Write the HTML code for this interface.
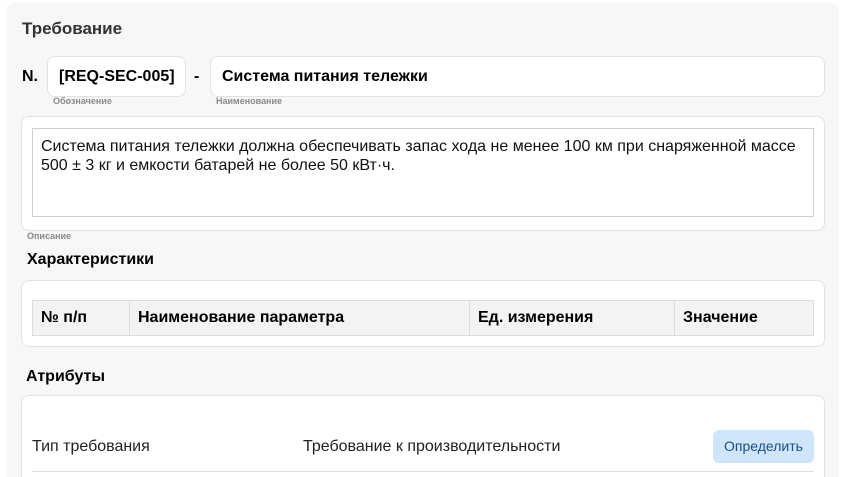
<!DOCTYPE html>
<html style="width:849px;height:477px;overflow:hidden"><head><meta charset="utf-8"><style>
*{box-sizing:border-box;margin:0;padding:0}
body{width:849px;height:477px;background:#fff;font-family:"Liberation Sans",sans-serif;position:relative;overflow:hidden;color:#000}
.a{position:absolute}
.panel{left:6px;top:3px;width:833px;height:474px;background:#f7f7f7;border-radius:8px 8px 0 0}
.box{background:#fff;border:1px solid #e2e2e2;border-radius:8px}
.lbl{font-size:9px;color:#8a8a8a;font-weight:bold}
.b{font-weight:bold}
table{border-collapse:collapse}
td{border:1px solid #dcdcdc;background:#f3f3f3;font-weight:bold;font-size:16px;padding:0 8px;height:35px}
</style></head><body>
<div class="a panel"></div>
<div class="a b" style="left:22px;top:19px;font-size:17px;color:#333">Требование</div>
<div class="a b" style="left:22px;top:68px;font-size:16px">N.</div>
<div class="a box" style="left:47px;top:56px;width:139px;height:41px"></div>
<div class="a b" style="left:59px;top:68px;font-size:16px">[REQ-SEC-005]</div>
<div class="a b" style="left:194px;top:68px;font-size:16px">-</div>
<div class="a box" style="left:210px;top:56px;width:615px;height:41px"></div>
<div class="a b" style="left:222px;top:68px;font-size:16px">Система питания тележки</div>
<div class="a lbl" style="left:53px;top:96px">Обозначение</div>
<div class="a lbl" style="left:216px;top:96px">Наименование</div>
<div class="a box" style="left:21px;top:116px;width:804px;height:115px"></div>
<div class="a" style="left:32px;top:128px;width:782px;height:89px;border:1px solid #cfcfcf;background:#fff"></div>
<div class="a" style="left:41px;top:137px;width:770px;font-size:16px;line-height:19px;color:#111">Система питания тележки должна обеспечивать запас хода не менее 100 км при снаряженной массе 500 ± 3 кг и емкости батарей не более 50 кВт·ч.</div>
<div class="a lbl" style="left:27px;top:231px">Описание</div>
<div class="a b" style="left:27px;top:251px;font-size:16px">Характеристики</div>
<div class="a box" style="left:21px;top:280px;width:804px;height:67px"></div>
<table class="a" style="left:32px;top:300px;width:782px">
<tr><td style="width:97px">№ п/п</td><td style="width:340px">Наименование параметра</td><td style="width:205px">Ед. измерения</td><td>Значение</td></tr>
</table>
<div class="a b" style="left:26px;top:368px;font-size:16px">Атрибуты</div>
<div class="a box" style="left:21px;top:395px;width:804px;height:100px"></div>
<div class="a" style="left:32px;top:438px;font-size:16px;color:#222">Тип требования</div>
<div class="a" style="left:303px;top:438px;font-size:16px;color:#222">Требование к производительности</div>
<div class="a" style="left:713px;top:430px;width:101px;height:33px;background:#cfe5fa;border-radius:6px;color:#1a4f8b;font-size:14px;line-height:33px;text-align:center">Определить</div>
<div class="a" style="left:32px;top:471px;width:782px;height:1px;background:#dcdcdc"></div>
</body></html>
